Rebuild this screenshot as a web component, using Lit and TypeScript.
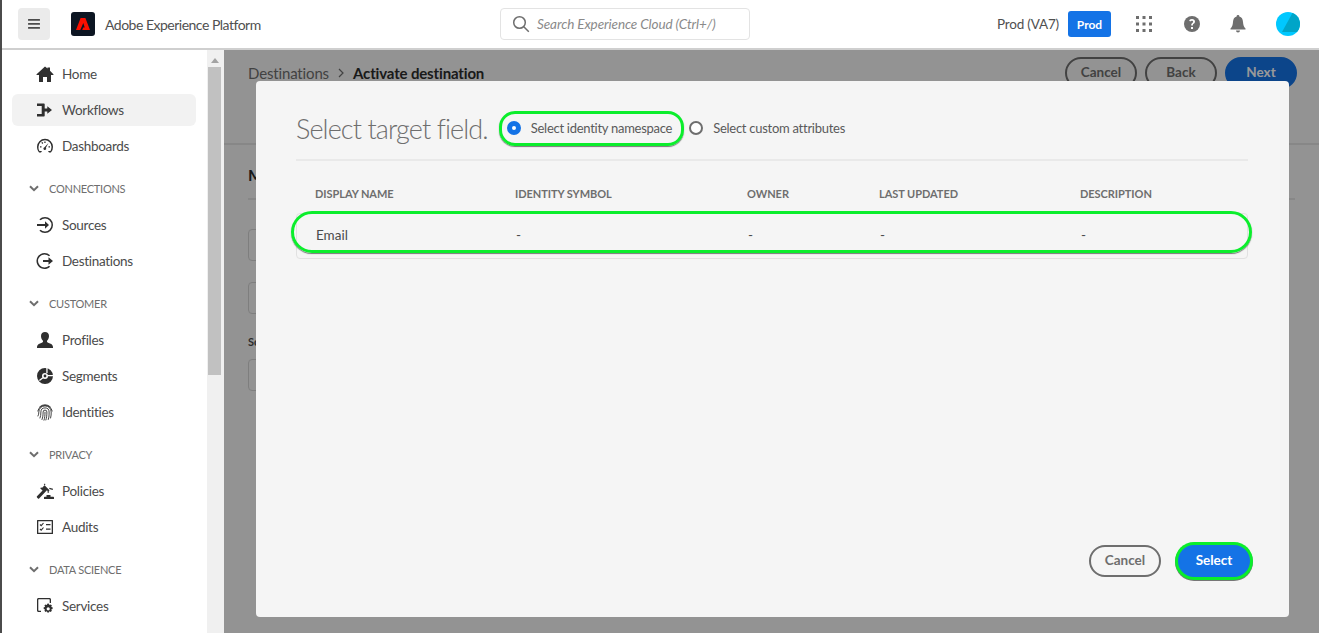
import { LitElement, html, css, svg } from 'lit';
import { customElement } from 'lit/decorators.js';

const ICONS: Record<string, unknown> = {
  home: svg`<path d="M9 1.600.6 9.300c-.3.300-.1.700.3.700H3v6.400c0 .3.200.6.600.6H7v-5h4v5h3.400c.4 0 .6-.3.6-.6V10h2.100c.4 0 .6-.4.3-.7L14 5.800V2.500h-2.500v1Z"/>`,
  workflows: svg`<path d="M1 2.500h7c.4 0 .7.300.7.700v4.300h2.600V5.300L16 9l-4.700 3.700v-2.200H8.700v4.300c0 .4-.3.700-.7.700H1V13h4.700V5H1Z"/>`,
  dash: svg`<path fill-rule="evenodd" d="M9 1.800a8 8 0 0 0-8 8c0 2.100.7 3.900 1.900 5.400.2.200.4.300.7.300h1.400l1-1.400H3.400A6.500 6.500 0 0 1 2.500 9.800 6.500 6.500 0 0 1 9 3.300a6.500 6.500 0 0 1 6.500 6.500c0 1.600-.4 3-1 4.300H12l1 1.400h1.400c.3 0 .5-.1.700-.3A8 8 0 0 0 17 9.800a8 8 0 0 0-8-8Z"/><path d="M12.500 6 9.900 10.700a1.400 1.400 0 1 1-1.400-.5ZM4 9.200h1.500v1.300H4ZM12.500 9.200H14v1.300h-1.500ZM8.300 4.600h1.300v1.500H8.300ZM5.300 5.800l1-.9 1 1.100-.9.900Z"/>`,
  sources: svg`<path d="M9 1a8 8 0 0 1 0 16 8 8 0 0 1-5.600-2.300l1.100-1A6.500 6.500 0 1 0 4.500 4.300l-1.100-1A8 8 0 0 1 9 1Z"/><path d="M9 5.300 13 9l-4 3.700V10H1V8h8Z"/>`,
  dest: svg`<path d="M8.500 1a8 8 0 0 1 5.600 2.300l-1.100 1a6.500 6.500 0 1 0 0 9.400l1.100 1A8 8 0 1 1 8.500 1Z"/><path d="M12.500 5.300 17 9l-4.500 3.700V10H7V8h5.500Z"/>`,
  profile: svg`<path d="M17 16.300V17H1v-.7c0-1.900 1-3.100 3.100-3.800 1.400-.5 2.600-.9 2.900-1.700.1-.4 0-1-.4-1.500C5.700 8.200 5 7 5 5c0-2.600 1.700-4 4-4s4 1.400 4 4c0 2-.7 3.200-1.600 4.300-.4.500-.5 1.100-.4 1.500.3.800 1.500 1.200 2.900 1.700 2.100.7 3.100 1.900 3.100 3.800Z"/>`,
  segments: svg`<path fill-rule="evenodd" d="M9 1a8 8 0 1 0 0 16A8 8 0 0 0 9 1Zm0 5a3 3 0 1 1 0 6 3 3 0 0 1 0-6Z"/><circle cx="9" cy="9" r="1.400"/><path fill="#fff" d="M10.300 0h1.300v6h-1.300ZM11.500 8h6.500v1.300h-6.500ZM3 13l3.500-2.800.8 1L3.800 14Z"/>`,
  identities: svg`<g fill="none" stroke="currentColor" stroke-width=".9" stroke-linecap="round"><path d="M3.500 4A7.500 7.500 0 0 1 14.500 4"/><path d="M1.800 8A7.500 7.500 0 0 1 16.200 8"/><path d="M2 13c.6-1 .8-2.500.8-4a6.200 6.200 0 0 1 12.400 0c0 2 0 4-.6 6"/><path d="M4 15c.6-1.500.9-3.500.9-6a4.100 4.100 0 0 1 8.200 0c0 3 0 5-.8 7.500"/><path d="M6 16.500c.8-2 1.100-4.500 1.100-7.500a1.900 1.900 0 0 1 3.800 0c0 3-.2 5.500-1 8"/><path d="M8 17.200c.8-2.500 1-5 1-8"/></g>`,
  policies: svg`<path d="M9.800.6 8.800 1.600l.7.7-3.600 3.600-.7-.7-1 1 3 3 1-1-.7-.7 1-1L1 14.300a.8.800 0 0 0 0 1.100l1 1a.8.800 0 0 0 1.100 0L10.900 8.200l1 1-.7.7 1 1 1-1-.7-.7 1-.9-5.700-5.700Z"/><path d="M10.500 13h4v1.800h2.800c.4 0 .7.300.7.700v1.500H8v-1.500c0-.4.300-.7.700-.7h1.800ZM13.500 5.800l3.500.9-.3 1.200-3.500-.9Z"/>`,
  audits: svg`<path fill-rule="evenodd" d="M1.500 2h15a.5.500 0 0 1 .5.500v13a.5.500 0 0 1-.5.500h-15a.5.500 0 0 1-.5-.500v-13a.5.500 0 0 1 .5-.500ZM2.300 3.300v11.400h13.400V3.300Z"/><path d="M10 6h4.500v1.300H10ZM10 10.500h4.500v1.300H10Z"/><path fill="none" stroke="currentColor" stroke-width="1.100" d="m4 6.500 1.200 1.200L7.500 5M4 11l1.200 1.200 2.300-2.700"/>`,
  services: svg`<path d="M2.500 1h11c.8 0 1.500.7 1.500 1.500V6h-1.300V2.800a.5.500 0 0 0-.5-.5H2.800a.5.500 0 0 0-.5.500v10.400c0 .3.200.5.500.5H5V15H2.500C1.700 15 1 14.300 1 13.500v-11C1 1.700 1.700 1 2.500 1Z"/><path fill-rule="evenodd" d="m12 6.500 1 .2.400 1.400 1.300-.7 1.200 1.200-.7 1.300 1.400.4v1.700l-1.400.4.700 1.300-1.200 1.200-1.300-.7-.4 1.400h-1.700l-.4-1.400-1.300.7-1.200-1.200.7-1.300-1.400-.4v-1.700l1.400-.4-.7-1.300 1.200-1.200 1.300.7.400-1.400Zm.2 3.700a1.600 1.600 0 1 0 0 3.200 1.600 1.600 0 0 0 0-3.200Z"/>`,
};

const NAV = [
  { items: [['home', 'Home'], ['workflows', 'Workflows', true], ['dash', 'Dashboards']] },
  { title: 'Connections', items: [['sources', 'Sources'], ['dest', 'Destinations']] },
  { title: 'Customer', items: [['profile', 'Profiles'], ['segments', 'Segments'], ['identities', 'Identities']] },
  { title: 'Privacy', items: [['policies', 'Policies'], ['audits', 'Audits']] },
  { title: 'Data Science', items: [['services', 'Services']] },
];

const COLUMNS = ['Display name', 'Identity symbol', 'Owner', 'Last updated', 'Description'];

@customElement('app-root')
export class AppRoot extends LitElement {
  static styles = css`
    :host {
      display: flex;
      flex-direction: column;
      height: 100vh;
      overflow: hidden;
      box-sizing: border-box;
      border-left: 2px solid #4b4b4b;
      font-family: 'Lato', 'Noto Sans', sans-serif;
      font-size: 14px;
      color: #4b4b4b;
      background: #fff;
    }

    /* header */
    .top {
      flex: none;
      height: 48px;
      border-bottom: 2px solid #cfcfcf;
      display: flex;
      align-items: center;
      padding: 0 19px 0 16px;
    }
    .burger {
      width: 32px;
      height: 32px;
      border-radius: 4px;
      background: #ebebeb;
      display: grid;
      place-items: center;
    }
    .logo {
      width: 24px;
      height: 24px;
      margin-left: 21px;
      border-radius: 3px;
      background: #0c1522;
      display: grid;
      place-items: center;
    }
    .title {
      margin-left: 10px;
      font-size: 14px;
      letter-spacing: -.5px;
      color: #505050;
      width: 395px;
    }
    .search {
      width: 250px;
      height: 32px;
      box-sizing: border-box;
      border: 1px solid #e3e3e3;
      border-radius: 4px;
      display: flex;
      align-items: center;
      gap: 7px;
      padding-left: 11px;
      padding-bottom: 1px;
      font-style: italic;
      font-size: 13.5px;
      letter-spacing: -.1px;
      color: #8a8a8a;
    }
    .top-right {
      margin-left: auto;
      display: flex;
      align-items: center;
    }
    .org { font-size: 13.5px; letter-spacing: -.2px; color: #505050; }
    .badge {
      margin-left: 9px;
      width: 43px;
      height: 26px;
      border-radius: 3px;
      background: #1473e6;
      color: #fff;
      font-weight: 700;
      font-size: 12px;
      display: grid;
      place-items: center;
    }
    .grid-ic { margin-left: 25px; color: #6e6e6e; }
    .help-ic { margin-left: 32px; color: #6e6e6e; }
    .bell-ic { margin-left: 30px; color: #6e6e6e; }
    .avatar { margin-left: 30px; }
    svg { display: block; }

    /* body */
    .body { flex: 1; display: flex; min-height: 0; }
    .side { flex: none; width: 205px; display: flex; flex-direction: column; gap: 4px; padding-top: 8px; box-sizing: border-box; }
    .item {
      flex: none;
      height: 32px;
      margin: 0 11px 0 10px;
      border-radius: 6px;
      display: flex;
      align-items: center;
      gap: 8px;
      padding-left: 24px;
      color: #4b4b4b;
      font-size: 13.5px;
      letter-spacing: -.3px;
    }
    .item svg { color: #2f2f2f; fill: currentColor; }
    .item.on { background: #f2f2f2; }
    .sec {
      flex: none;
      height: 32px;
      box-sizing: border-box;
      padding-bottom: 2px;
      margin-top: 7px;
      display: flex;
      align-items: center;
      gap: 10px;
      padding-left: 27px;
      font-size: 11px;
      letter-spacing: -.25px;
      text-transform: uppercase;
      color: #6e6e6e;
    }
    .bar {
      flex: none;
      width: 17px;
      background: #f0f0f0;
      padding: 4px 3px 0 1px;
      box-sizing: border-box;
    }
    .bar .up {
      width: 0;
      margin: 4px auto 4px;
      border: 4px solid transparent;
      border-top: 0;
      border-bottom: 5px solid #a3a3a3;
    }
    .bar .thumb { height: 308px; background: #c1c1c1; }

    /* page behind the dialog */
    .main { flex: 1; position: relative; background: #f5f5f5; min-width: 0; }
    .page-head {
      height: 95px;
      box-sizing: border-box;
      border-bottom: 2px solid #e1e1e1;
      background: #f5f5f5;
      display: flex;
      align-items: flex-start;
      justify-content: space-between;
      padding: 7px 22px 0 24px;
    }
    .crumbs { display: flex; align-items: center; gap: 9px; font-size: 15px; letter-spacing: -.15px; height: 32px; color: #6e6e6e; }
    .crumbs b { color: #2c2c2c; font-weight: 700; }
    .acts { display: flex; gap: 8px; }
    .btn {
      box-sizing: border-box;
      width: 72px;
      height: 32px;
      padding-bottom: 2px;
      border-radius: 16px;
      border: 2px solid #6e6e6e;
      color: #6e6e6e;
      font-weight: 700;
      font-size: 13.5px;
      display: grid;
      place-items: center;
    }
    .btn.cta { background: #1473e6; border-color: #1473e6; color: #fff; }
    .page-body { padding: 18px 24px; }
    .page-body h3 { margin: 0; font-size: 16px; line-height: 24px; color: #2c2c2c; }
    .page-body hr { border: 0; border-top: 2px solid #e1e1e1; margin: 11px 0 29px; }
    .ghost { width: 300px; height: 32px; box-sizing: border-box; border: 1px solid #d3d3d3; border-radius: 4px; margin-bottom: 21px; background: #f5f5f5; }
    .page-body small { display: block; font-weight: 700; font-size: 11px; line-height: 13px; margin-bottom: 11px; color: #4b4b4b; }

    .scrim {
      position: absolute;
      inset: 0;
      background: rgba(0, 0, 0, .4);
      display: flex;
      padding: 31px 30px 16px 32px;
    }
    .modal {
      flex: 1;
      background: #f5f5f5;
      border-radius: 4px;
      display: flex;
      flex-direction: column;
      padding: 0 41px 40px 40px;
    }
    .modal-head {
      height: 80px;
      box-sizing: border-box;
      border-bottom: 2px solid #e9e9e9;
      display: flex;
      align-items: center;
      padding: 30px 0 13px;
    }
    .modal-head h2 {
      margin: 0 11px 0 0;
      font-size: 27px;
      letter-spacing: -.9px;
      font-weight: 300;
      color: #6e6e6e;
      white-space: nowrap;
    }
    .radio {
      display: flex;
      align-items: center;
      gap: 10px;
      font-size: 13px;
      letter-spacing: -.27px;
      color: #5a5a5a;
      white-space: nowrap;
      padding-bottom: 2px;
    }
    .radio i {
      box-sizing: border-box;
      width: 14px;
      height: 14px;
      border-radius: 50%;
      border: 2px solid #6e6e6e;
      background: #fff;
    }
    .radio.sel i { border: 5px solid #1473e6; }
    .radio.sel {
      box-sizing: border-box;
      height: 35px;
      padding: 0 9px 2px 5px;
      margin-right: 5px;
      border: 3px solid #0bee2c;
      border-radius: 16px;
      box-shadow: 0 1px 1px #777;
    }
    .cols, .row {
      display: grid;
      grid-template-columns: 200px 232px 132px 201px 1fr;
      padding-left: 19px;
    }
    .cols {
      margin-top: 24px;
      height: 16px;
      align-items: center;
      font-size: 11px;
      font-weight: 700;
      letter-spacing: -.05px;
      text-transform: uppercase;
      color: #6e6e6e;
    }
    .row {
      position: relative;
      margin-top: 12px;
      height: 46px;
      box-sizing: border-box;
      border: 1px solid #e1e1e1;
      border-radius: 4px;
      align-items: center;
      padding-bottom: 2px;
      font-size: 13.5px;
      color: #4b4b4b;
    }
    .ring {
      position: absolute;
      left: -6px;
      right: -5px;
      top: -3px;
      height: 42px;
      box-sizing: border-box;
      border: 3px solid #0bee2c;
      border-radius: 21px;
      box-shadow: 0 1px 1px #777;
    }
    .foot {
      margin-top: auto;
      margin-right: -2px;
      display: flex;
      justify-content: flex-end;
      align-items: center;
      gap: 17px;
    }
    .foot .cta { box-shadow: 0 0 0 3px #0bee2c, 0 1px 0 3px #777; }
  `;

  private icon(name: string) {
    return html`<svg width="18" height="18" viewBox="0 0 18 18" fill="currentColor">${ICONS[name]}</svg>`;
  }

  private nav() {
    return NAV.map(group => html`
      ${group.title ? html`
        <div class="sec">
          <svg width="10" height="7" viewBox="0 0 10 7" fill="none" stroke="#6e6e6e" stroke-width="2"><path d="M1 1.200 5 5.200l4-4"/></svg>
          ${group.title}
        </div>` : ''}
      ${group.items.map(([ic, label, on]) => html`
        <div class="item ${on ? 'on' : ''}">${this.icon(ic as string)}<span>${label}</span></div>
      `)}
    `);
  }

  render() {
    return html`
      <div class="top">
        <div class="burger">
          <svg width="14" height="12" viewBox="0 0 14 12" fill="#4b4b4b"><rect x="1" y="1" width="12" height="1.800" rx=".5"/><rect x="1" y="5" width="12" height="1.800" rx=".5"/><rect x="1" y="9" width="12" height="1.800" rx=".5"/></svg>
        </div>
        <div class="logo">
          <svg width="14" height="12" viewBox="0 0 14 12" fill="#fa0f00"><path d="M4.600 0h4.800L14 12H6.200l1-2.600h1.500L7.300 5 4.300 12H0Z"/></svg>
        </div>
        <div class="title">Adobe Experience Platform</div>
        <div class="search">
          <svg width="18" height="18" viewBox="0 0 18 18" fill="none" stroke="#6e6e6e" stroke-width="1.500"><circle cx="7.500" cy="7.500" r="5.800"/><path d="m11.800 11.800 5 5"/></svg>
          Search Experience Cloud (Ctrl+/)
        </div>
        <div class="top-right">
          <span class="org">Prod (VA7)</span>
          <span class="badge">Prod</span>
          <svg class="grid-ic" width="16" height="16" viewBox="0 0 16 16" fill="currentColor">
            ${[0, 6.5, 13].map(y => [0, 6.5, 13].map(x => svg`<rect x=${x} y=${y} width="3" height="3"/>`))}
          </svg>
          <svg class="help-ic" width="16" height="16" viewBox="0 0 16 16"><circle cx="8" cy="8" r="8" fill="currentColor"/><path fill="#fff" d="M7 11h2v2H7ZM8 3c1.800 0 3 1 3 2.500 0 1.200-.7 1.800-1.400 2.300-.5.400-.7.600-.7 1.200v.400H7.200V9c0-1.100.5-1.600 1.100-2.100.5-.4.800-.7.800-1.200 0-.6-.5-1-1.200-1-.6 0-1.200.2-1.800.7L5.100 4.200C6 3.400 7 3 8 3Z"/></svg>
          <svg class="bell-ic" width="16" height="18" viewBox="0 0 16 18" fill="currentColor"><path d="M8 0a1.300 1.300 0 0 1 1.300 1.500C11.800 2 12.800 4 13 7c.2 3 .8 5 2.500 6.500v1H.5v-1C2.200 12 2.800 10 3 7c.2-3 1.200-5 3.700-5.500A1.300 1.300 0 0 1 8 0ZM6 15.500h4A2 2 0 0 1 8 17.500a2 2 0 0 1-2-2Z"/></svg>
          <svg class="avatar" width="24" height="24" viewBox="0 0 24 24">
            <defs><clipPath id="av"><circle cx="12" cy="12" r="12"/></clipPath></defs>
            <circle cx="12" cy="12" r="12" fill="#00c8ff"/>
            <path fill="#00a5c8" clip-path="url(#av)" d="M17 0 6 20H24V0Z"/>
          </svg>
        </div>
      </div>
      <div class="body">
        <nav class="side">${this.nav()}</nav>
        <div class="bar"><div class="up"></div><div class="thumb"></div></div>
        <div class="main">
          <div class="page-head">
            <div class="crumbs">
              <span>Destinations</span>
              <svg width="6" height="10" viewBox="0 0 6 10" fill="none" stroke="#6e6e6e" stroke-width="1.200"><path d="m1 1 4 4-4 4"/></svg>
              <b>Activate destination</b>
            </div>
            <div class="acts">
              <span class="btn">Cancel</span><span class="btn">Back</span><span class="btn cta">Next</span>
            </div>
          </div>
          <div class="page-body">
            <h3>Mapping</h3>
            <hr />
            <div class="ghost"></div>
            <div class="ghost"></div>
            <small>Source</small>
            <div class="ghost"></div>
          </div>
          <div class="scrim">
            <div class="modal">
              <div class="modal-head">
                <h2>Select target field.</h2>
                <div class="radio sel"><i></i>Select identity namespace</div>
                <div class="radio"><i></i>Select custom attributes</div>
              </div>
              <div class="cols">${COLUMNS.map(c => html`<span>${c}</span>`)}</div>
              <div class="row">
                <span>Email</span><span>-</span><span>-</span><span>-</span><span>-</span>
                <div class="ring"></div>
              </div>
              <div class="foot">
                <span class="btn">Cancel</span>
                <span class="btn cta">Select</span>
              </div>
            </div>
          </div>
        </div>
      </div>
    `;
  }
}
